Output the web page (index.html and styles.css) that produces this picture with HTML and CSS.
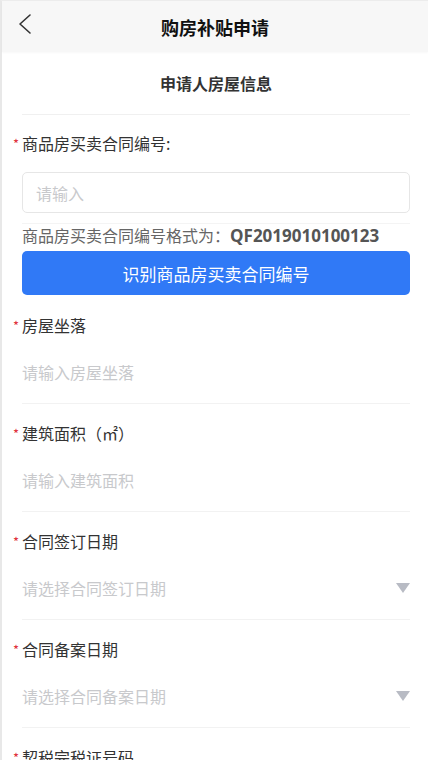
FILE: index.html
```html
<!DOCTYPE html>
<html lang="zh-CN">
<head>
  <meta charset="UTF-8" />
  <meta name="viewport" content="width=device-width, initial-scale=1.0"/>
  <title>购房补贴申请</title>
  <link rel="stylesheet" href="styles.css">
</head>
<body>

  <div class="page">
    <header class="nav-bar">
      <a href="#" class="back-button">
        <svg width="14" height="22" viewBox="0 0 14 22">
          <path d="M12 2 L2 11 L12 20" fill="none" stroke="#333" stroke-width="1.6" stroke-linecap="round" stroke-linejoin="round"/>
        </svg>
      </a>
      <h1>购房补贴申请</h1>
    </header>

    <h2 class="section-title">申请人房屋信息</h2>

    <form id="house-form">
      <div class="field field-contract">
        <label class="field-label"><span class="star">*</span>商品房买卖合同编号:</label>
        <input type="text" class="box-input" placeholder="请输入" />
        <div class="hint">商品房买卖合同编号格式为：<b>QF2019010100123</b></div>
        <button type="button" class="ocr-button">识别商品房买卖合同编号</button>
      </div>

      <div class="field">
        <label class="field-label"><span class="star">*</span>房屋坐落</label>
        <input type="text" class="line-input" placeholder="请输入房屋坐落" />
      </div>

      <div class="field">
        <label class="field-label"><span class="star">*</span>建筑面积（㎡）</label>
        <input type="text" class="line-input" placeholder="请输入建筑面积" />
      </div>

      <div class="field">
        <label class="field-label"><span class="star">*</span>合同签订日期</label>
        <div class="select-row">
          <span class="placeholder">请选择合同签订日期</span>
          <span class="arrow"></span>
        </div>
      </div>

      <div class="field">
        <label class="field-label"><span class="star">*</span>合同备案日期</label>
        <div class="select-row">
          <span class="placeholder">请选择合同备案日期</span>
          <span class="arrow"></span>
        </div>
      </div>

      <div class="field">
        <label class="field-label"><span class="star">*</span>契税完税证号码</label>
        <input type="text" class="line-input" placeholder="请输入契税完税证号码" />
      </div>
    </form>
  </div>

</body>
</html>
```

FILE: styles.css
```css
* {
  box-sizing: border-box;
}

body {
  margin: 0;
  font-family: "Noto Sans CJK SC", "Noto Sans", sans-serif;
  background-color: #fff;
  color: #333;
}

.page {
  min-height: 100vh;
  border-left: 2px solid #e8e8e8;
  border-top: 1px solid #ececec;
}

.nav-bar {
  position: relative;
  height: 51px;
  background-color: #f7f7f7;
  display: flex;
  align-items: center;
  justify-content: center;
  box-shadow: 0 1px 2px rgba(0, 0, 0, 0.03);
}

.nav-bar h1 {
  margin: 0;
  font-size: 18px;
  font-weight: bold;
  color: #111;
}

.back-button {
  position: absolute;
  left: 16px;
  top: 12px;
  display: flex;
}

.section-title {
  margin: 0 18px 0 20px;
  padding: 20px 0 20px;
  line-height: 22px;
  text-align: center;
  font-size: 16px;
  font-weight: bold;
  color: #333;
  border-bottom: 1px solid #f0f0f0;
}

.field {
  margin: 0 18px 0 20px;
  padding: 18px 0 20px;
  border-bottom: 1px solid #f2f2f2;
}

.field-contract {
  border-bottom: none;
  padding-top: 17px;
  padding-bottom: 1px;
}

.field-label {
  display: block;
  position: relative;
  line-height: 22px;
  font-size: 16px;
  color: #333;
}

.star {
  position: absolute;
  left: -9px;
  top: 1px;
  font-size: 13px;
  color: #e0303b;
}

.box-input {
  display: block;
  width: 100%;
  height: 41px;
  margin-top: 18px;
  padding: 0 13px;
  border: 1px solid #e6e6e6;
  border-radius: 5px;
  font-family: inherit;
  font-size: 16px;
  color: #333;
  outline: none;
}

.box-input::placeholder,
.line-input::placeholder {
  color: #c8c9cc;
}

.hint {
  margin-top: 10px;
  padding-top: 0;
  border-top: 1px solid #f4f4f4;
  line-height: 22px;
  font-size: 16px;
  color: #666;
}

.hint b {
  font-family: "Open Sans", sans-serif;
  font-size: 17px;
  color: #555;
}

.ocr-button {
  display: block;
  width: 100%;
  height: 44px;
  margin-top: 4px;
  border: none;
  border-radius: 5px;
  background-color: #3079f6;
  color: #fff;
  font-family: inherit;
  font-size: 17px;
  cursor: pointer;
}

.line-input {
  display: block;
  width: 100%;
  margin-top: 25px;
  padding: 0;
  height: 22px;
  border: none;
  font-family: inherit;
  font-size: 16px;
  color: #333;
  outline: none;
}

.select-row {
  display: flex;
  align-items: center;
  justify-content: space-between;
  margin-top: 25px;
  height: 22px;
}

.placeholder {
  font-size: 16px;
  color: #c8c9cc;
}

.arrow {
  width: 0;
  height: 0;
  border-left: 7px solid transparent;
  border-right: 7px solid transparent;
  border-top: 10px solid #b8bbc4;
}
```
